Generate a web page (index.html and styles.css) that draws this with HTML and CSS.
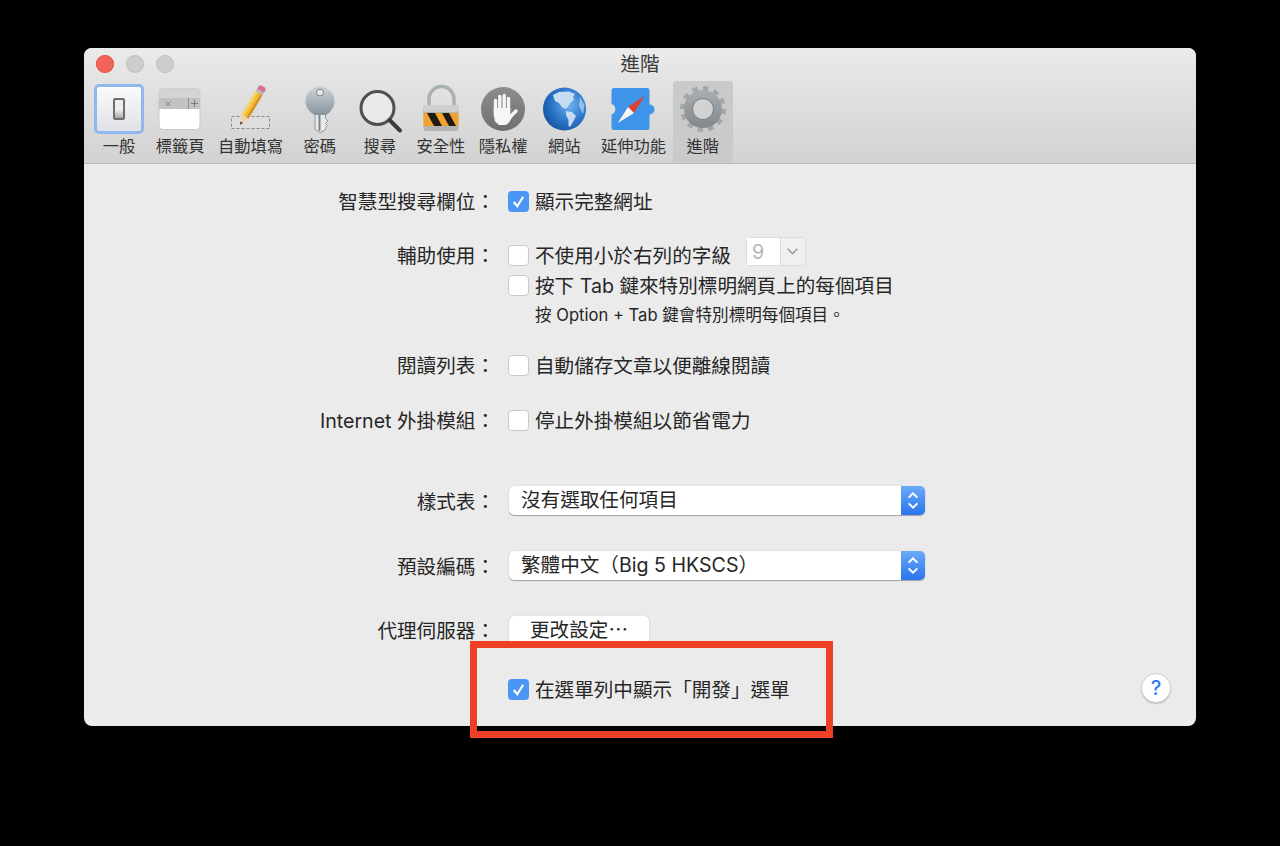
FILE: index.html
```html
<!DOCTYPE html>
<html lang="zh-Hant">
<head>
    <meta charset="UTF-8">
    <title>進階</title>
    <link rel="stylesheet" href="styles.css">
</head>
<body>
    <div class="window">
        <div class="titlebar">
            <div class="lights">
                <span class="light close"></span>
                <span class="light"></span>
                <span class="light"></span>
            </div>
            <div class="title">進階</div>
        </div>

        <div class="toolbar">
            <div class="tool">
                <div class="general-icon"><span class="switch"></span></div>
                <span class="tool-name">一般</span>
            </div>
            <div class="tool">
                <svg class="icon" viewBox="0 0 50 50">
                    <rect x="4" y="4.500" width="41" height="41" rx="3.500" fill="#fff" stroke="#c9c9c9"/>
                    <path d="M4 14V7.500A3 3 0 0 1 7 4.500H42A3 3 0 0 1 45 7.500V14Z" fill="#d5d3d4"/>
                    <rect x="4" y="14" width="41" height="11" fill="#c3c1c3"/>
                    <path d="M33.500 14V25" stroke="#8f8d8f"/>
                    <path d="M11 17.500L15.500 22M15.500 17.500L11 22" stroke="#7d7b7d"/>
                    <path d="M36 19.500H43M39.500 16V23" stroke="#7d7b7d"/>
                </svg>
                <span class="tool-name">標籤頁</span>
            </div>
            <div class="tool">
                <svg class="icon" viewBox="0 0 50 50">
                    <rect x="6.500" y="32.500" width="38" height="12" fill="#e4e4e4" fill-opacity=".4" stroke="#8b8b8b" stroke-dasharray="3 2"/>
                    <g transform="translate(15 41) rotate(31)">
                        <path d="M0 0L-4 -10H4Z" fill="#eed5a6"/>
                        <path d="M0 0L-1.300 -3.300H1.300Z" fill="#333"/>
                        <rect x="-4" y="-37" width="8" height="27" fill="#f3bd3a"/>
                        <rect x="-4" y="-37" width="2.500" height="27" fill="#f9d463"/>
                        <rect x="1.500" y="-37" width="2.500" height="27" fill="#d3922a"/>
                        <rect x="-4" y="-40" width="8" height="3" fill="#b9b9b9"/>
                        <path d="M-4 -40V-42A3 3 0 0 1 -1 -45H1A3 3 0 0 1 4 -42V-40Z" fill="#d9708c"/>
                    </g>
                </svg>
                <span class="tool-name">自動填寫</span>
            </div>
            <div class="tool">
                <svg class="icon" viewBox="0 0 50 50">
                    <defs>
                        <linearGradient id="keyFill" x1="0" y1="0" x2="0" y2="1">
                            <stop offset="0" stop-color="#ced6da"/>
                            <stop offset="1" stop-color="#87939a"/>
                        </linearGradient>
                    </defs>
                    <path d="M20 30V45L25 49L30.500 45.500V43.500L32.500 41.500L30.500 39.500L33 37L30.500 34.500V30Z" fill="#e8e9ea" stroke="#8e979b"/>
                    <path d="M20 31C14 28 10.500 23 10.500 17A14.500 14.500 0 0 1 39.500 17C39.500 23 36 28 31 31Z" fill="url(#keyFill)"/>
                    <path d="M24.500 31V47" stroke="#7c8488" stroke-width="2"/>
                    <circle cx="25" cy="8.500" r="3.500" fill="#e6e6e6" stroke="#78848a"/>
                </svg>
                <span class="tool-name">密碼</span>
            </div>
            <div class="tool">
                <svg class="icon" viewBox="0 0 50 50">
                    <circle cx="22.500" cy="24" r="16.500" fill="#f2f2f2" fill-opacity=".6" stroke="#505050" stroke-width="3"/>
                    <path d="M34.500 36L45 46.500" stroke="#3c3c3c" stroke-width="4" stroke-linecap="round"/>
                </svg>
                <span class="tool-name">搜尋</span>
            </div>
            <div class="tool">
                <svg class="icon" viewBox="0 0 50 50">
                    <path d="M13 24V15A12.500 12.500 0 0 1 38 15V24" fill="none" stroke="#a9b0b3" stroke-width="3.500"/>
                    <rect x="7.500" y="21" width="35" height="26" rx="2.500" fill="#b4b4b4"/>
                    <rect x="7.500" y="21" width="35" height="7" rx="2" fill="#cfcfcf"/>
                    <rect x="7.500" y="29" width="35" height="13" fill="#f0a42f"/>
                    <path d="M11 29H19L26 42H18ZM26 29H33L40 42H33Z" fill="#1f1a12"/>
                </svg>
                <span class="tool-name">安全性</span>
            </div>
            <div class="tool">
                <svg class="icon" viewBox="0 0 50 50">
                    <defs>
                        <linearGradient id="handFill" x1="0" y1="0" x2="0" y2="1">
                            <stop offset="0" stop-color="#8d8d8d"/>
                            <stop offset="1" stop-color="#6f6f6f"/>
                        </linearGradient>
                    </defs>
                    <circle cx="25" cy="25" r="22" fill="url(#handFill)"/>
                    <g fill="none" stroke="#f6f6f6" stroke-width="3.400" stroke-linecap="round">
                        <path d="M17.500 28V16.500"/>
                        <path d="M21.800 25V12.500"/>
                        <path d="M26.200 25V11.500"/>
                        <path d="M30.500 26V14.500"/>
                        <path d="M32 33L38 27"/>
                    </g>
                    <path d="M15.700 24H32.300V32L35 32L31 38.500L28 41H21L17 37.500L15.700 31Z" fill="#f6f6f6"/>
                </svg>
                <span class="tool-name">隱私權</span>
            </div>
            <div class="tool">
                <svg class="icon" viewBox="0 0 50 50">
                    <defs>
                        <radialGradient id="globeFill" cx=".62" cy=".4" r=".7">
                            <stop offset="0" stop-color="#6fb2ea"/>
                            <stop offset=".55" stop-color="#2f78cc"/>
                            <stop offset="1" stop-color="#124f9f"/>
                        </radialGradient>
                    </defs>
                    <circle cx="25.500" cy="25" r="21.500" fill="url(#globeFill)"/>
                    <path d="M14 11L20 8L30 7.500L36 10L34 13L35 16L31 19L29 23L26.500 25L23 23L20 19L16 17Z" fill="#c5dcf2"/>
                    <path d="M27 27L33 28L37 32L34 38L31 43L29.500 42L29.500 36L27 31Z" fill="#c5dcf2"/>
                    <path d="M41 13L45.500 21L44 30L40 22Z" fill="#a9cdec" fill-opacity=".8"/>
                </svg>
                <span class="tool-name">網站</span>
            </div>
            <div class="tool">
                <svg class="icon" viewBox="0 0 50 50">
                    <path d="M6 4H39A2.500 2.500 0 0 1 41.500 6.500V20.500A5 5 0 1 1 41.500 30.500V43.500A2.500 2.500 0 0 1 39 46H6A2.500 2.500 0 0 1 3.500 43.500V30.500A5.500 5.500 0 0 0 3.500 20V6.500A2.500 2.500 0 0 1 6 4Z" fill="#3d94e8"/>
                    <path d="M36.500 12L26 29L20 23Z" fill="#e2412f"/>
                    <path d="M9.800 39L20 23L26 29Z" fill="#f5f5f5"/>
                </svg>
                <span class="tool-name">延伸功能</span>
            </div>
            <div class="tool selected">
                <svg class="icon" viewBox="0 0 50 50">
                    <defs>
                        <linearGradient id="gearFill" x1="0" y1="0" x2="0" y2="1">
                            <stop offset="0" stop-color="#a4aaad"/>
                            <stop offset="1" stop-color="#858b8e"/>
                        </linearGradient>
                    </defs>
                    <circle cx="25" cy="25" r="20.500" fill="none" stroke="#a2a7aa" stroke-width="5" pathLength="24" stroke-dasharray="1 1"/>
                    <circle cx="25" cy="25" r="14.500" fill="none" stroke="url(#gearFill)" stroke-width="9"/>
                    <circle cx="25" cy="25" r="10.500" fill="#d2d2d2" stroke="#7a8083"/>
                </svg>
                <span class="tool-name">進階</span>
            </div>
        </div>

        <div class="content">
            <div class="row first">
                <div class="label">智慧型搜尋欄位：</div>
                <div class="control">
                    <span class="check on"><svg viewBox="0 0 20 20"><path d="M5.500 10.500L8.800 14.500L14.500 5.500" fill="none" stroke="#fff" stroke-width="2"/></svg></span>
                    <span>顯示完整網址</span>
                </div>
            </div>

            <div class="row access">
                <div class="label">輔助使用：</div>
                <div class="control">
                    <span class="check"></span>
                    <span>不使用小於右列的字級</span>
                    <div class="combo">
                        <span class="combo-value">9</span>
                        <span class="combo-arrow"><svg viewBox="0 0 12 8"><path d="M1.500 1.500L6 6L10.500 1.500" fill="none" stroke="#a0a0a0" stroke-width="1.500"/></svg></span>
                    </div>
                </div>
            </div>
            <div class="row">
                <div class="label"></div>
                <div class="control">
                    <span class="check"></span>
                    <span>按下 Tab 鍵來特別標明網頁上的每個項目</span>
                </div>
            </div>
            <div class="row note">
                <div class="label"></div>
                <div class="control note-text">按 Option + Tab 鍵會特別標明每個項目。</div>
            </div>

            <div class="row reading">
                <div class="label">閱讀列表：</div>
                <div class="control">
                    <span class="check"></span>
                    <span>自動儲存文章以便離線閱讀</span>
                </div>
            </div>

            <div class="row plugins">
                <div class="label">Internet 外掛模組：</div>
                <div class="control">
                    <span class="check"></span>
                    <span>停止外掛模組以節省電力</span>
                </div>
            </div>

            <div class="row sheets">
                <div class="label">樣式表：</div>
                <div class="control">
                    <div class="select">
                        <span class="select-text">沒有選取任何項目</span>
                        <span class="stepper"><svg viewBox="0 0 24 30"><path d="M7.500 12L12 7.500L16.500 12M7.500 18L12 22.500L16.500 18" fill="none" stroke="#fff" stroke-width="2"/></svg></span>
                    </div>
                </div>
            </div>

            <div class="row encoding">
                <div class="label">預設編碼：</div>
                <div class="control">
                    <div class="select">
                        <span class="select-text">繁體中文（Big 5 HKSCS）</span>
                        <span class="stepper"><svg viewBox="0 0 24 30"><path d="M7.500 12L12 7.500L16.500 12M7.500 18L12 22.500L16.500 18" fill="none" stroke="#fff" stroke-width="2"/></svg></span>
                    </div>
                </div>
            </div>

            <div class="row proxy">
                <div class="label">代理伺服器：</div>
                <div class="control">
                    <div class="button">更改設定⋯</div>
                </div>
            </div>

            <div class="row dev">
                <div class="label"></div>
                <div class="control">
                    <span class="check on"><svg viewBox="0 0 20 20"><path d="M5.500 10.500L8.800 14.500L14.500 5.500" fill="none" stroke="#fff" stroke-width="2"/></svg></span>
                    <span>在選單列中顯示「開發」選單</span>
                </div>
            </div>
        </div>

        <div class="help">?</div>
        <div class="highlight"></div>
    </div>
</body>
</html>
```

FILE: styles.css
```css
html, body {
    margin: 0;
    height: 846px;
    overflow: hidden;
}
body {
    box-sizing: border-box;
    padding: 48px 84px 0;
    background-color: #000;
    color: #262626;
    font-family: "Inter", "Noto Sans CJK TC", sans-serif;
    font-size: 19.6px;
}
.window {
    position: relative;
    height: 678px;
    border-radius: 8px;
    background-color: #ebebeb;
}
.titlebar {
    position: relative;
    height: 33px;
    border-radius: 8px 8px 0 0;
    background: linear-gradient(#ebebeb, #e3e3e3);
}
.lights {
    display: flex;
    gap: 12px;
    padding: 7px 0 0 12px;
}
.light {
    width: 18px;
    height: 18px;
    border-radius: 50%;
    background-color: #cdcdcd;
    box-shadow: inset 0 0 0 1px #c2c2c2;
}
.close {
    background-color: #f4625c;
    box-shadow: inset 0 0 0 1px #e55850;
}
.title {
    position: absolute;
    top: 2px;
    left: 0;
    right: 0;
    text-align: center;
    line-height: 28px;
    color: #3a3a3a;
}
.toolbar {
    display: flex;
    box-sizing: border-box;
    height: 83px;
    padding-left: 5px;
    border-bottom: 1px solid #b9b9b9;
    background: linear-gradient(#e3e3e3, #d2d2d2);
}
.tool {
    display: flex;
    flex-direction: column;
    align-items: center;
    box-sizing: border-box;
    min-width: 60px;
    padding-top: 3px;
    font-size: 16.3px;
    line-height: 24px;
    color: #333;
}
.tool-name {
    padding: 0 6.700px;
    white-space: nowrap;
}
.selected {
    border-radius: 4px 4px 0 0;
    background-color: #cacaca;
}
.icon {
    display: block;
    flex: none;
    width: 50px;
    height: 50px;
}
.general-icon {
    display: flex;
    flex: none;
    align-items: center;
    justify-content: center;
    box-sizing: border-box;
    width: 50px;
    height: 50px;
    border: 3px solid #8fb9ec;
    border-radius: 5px;
    background: linear-gradient(#fbfbfb, #dfe1e6);
}
.switch {
    box-sizing: border-box;
    width: 12px;
    height: 22px;
    border: 2px solid #6e6e6e;
    border-radius: 2px;
    background: linear-gradient(#efefef 55%, #a9a9a9);
}
.content {
    padding-top: 22px;
}
.row {
    display: flex;
    align-items: center;
    height: 30px;
}
.label {
    flex: none;
    width: 411px;
    padding-bottom: 2px;
    text-align: right;
}
.control {
    display: flex;
    align-items: center;
    gap: 6px;
    margin-left: 13px;
    white-space: nowrap;
}
.control > span:not(.check) {
    padding-bottom: 2px;
}
.access { margin-top: 24px; }
.note { height: 28px; }
.reading { margin-top: 22px; }
.plugins { margin-top: 25px; }
.sheets { margin-top: 51px; }
.encoding { margin-top: 35px; }
.proxy { margin-top: 34px; }
.dev { margin-top: 29px; }
.note-text {
    margin-left: 40px;
    padding-bottom: 1px;
    font-size: 16.6px;
}
.check {
    flex: none;
    box-sizing: border-box;
    width: 21px;
    height: 21px;
    border: 1px solid #c9c9c9;
    border-radius: 4px;
    background-color: #fff;
}
.check svg {
    display: block;
    width: 21px;
    height: 21px;
}
.check.on {
    border: none;
    background-color: #4b95f4;
}
.combo {
    display: flex;
    box-sizing: border-box;
    width: 60px;
    height: 29px;
    margin: -7px 0 0 9px;
    border: 1px solid #dcdcdc;
    border-radius: 4px;
    background-color: #f0f0f0;
}
.combo-value {
    width: 33px;
    padding-left: 5px;
    box-sizing: border-box;
    background-color: #fff;
    color: #b4b4b4;
    line-height: 28px;
}
.combo-arrow {
    flex: 1;
    display: flex;
    align-items: center;
    justify-content: center;
    border-left: 1px solid #dcdcdc;
}
.combo-arrow svg {
    width: 13px;
    height: 9px;
}
.select {
    display: flex;
    justify-content: space-between;
    box-sizing: border-box;
    width: 416px;
    height: 29px;
    margin: -1px 0 0 1px;
    border-radius: 5px;
    background-color: #fff;
    box-shadow: 0 1px 1px rgba(0,0,0,0.3), 0 0 1px rgba(0,0,0,0.25);
    overflow: hidden;
}
.select-text {
    padding-left: 12px;
    line-height: 29px;
}
.stepper {
    width: 24px;
    background: linear-gradient(#6aabf7, #2a74ee);
}
.stepper svg {
    display: block;
    width: 24px;
    height: 29px;
}
.button {
    box-sizing: border-box;
    width: 140px;
    height: 29px;
    margin: 1px 0 0 1px;
    border-radius: 5px;
    background-color: #fff;
    box-shadow: 0 1px 1px rgba(0,0,0,0.3), 0 0 1px rgba(0,0,0,0.25);
    text-align: center;
    line-height: 28px;
}
.help {
    position: absolute;
    left: 1057px;
    top: 625px;
    width: 28px;
    height: 28px;
    border: 1px solid #cfcfcf;
    border-radius: 50%;
    background-color: #fff;
    box-shadow: 0 1px 1px rgba(0,0,0,0.2);
    color: #2f7cf6;
    font-size: 20px;
    font-weight: 500;
    line-height: 28px;
    text-align: center;
}
.highlight {
    position: absolute;
    left: 386px;
    top: 593px;
    box-sizing: border-box;
    width: 363px;
    height: 97px;
    border: 7px solid #ee4026;
}
```
